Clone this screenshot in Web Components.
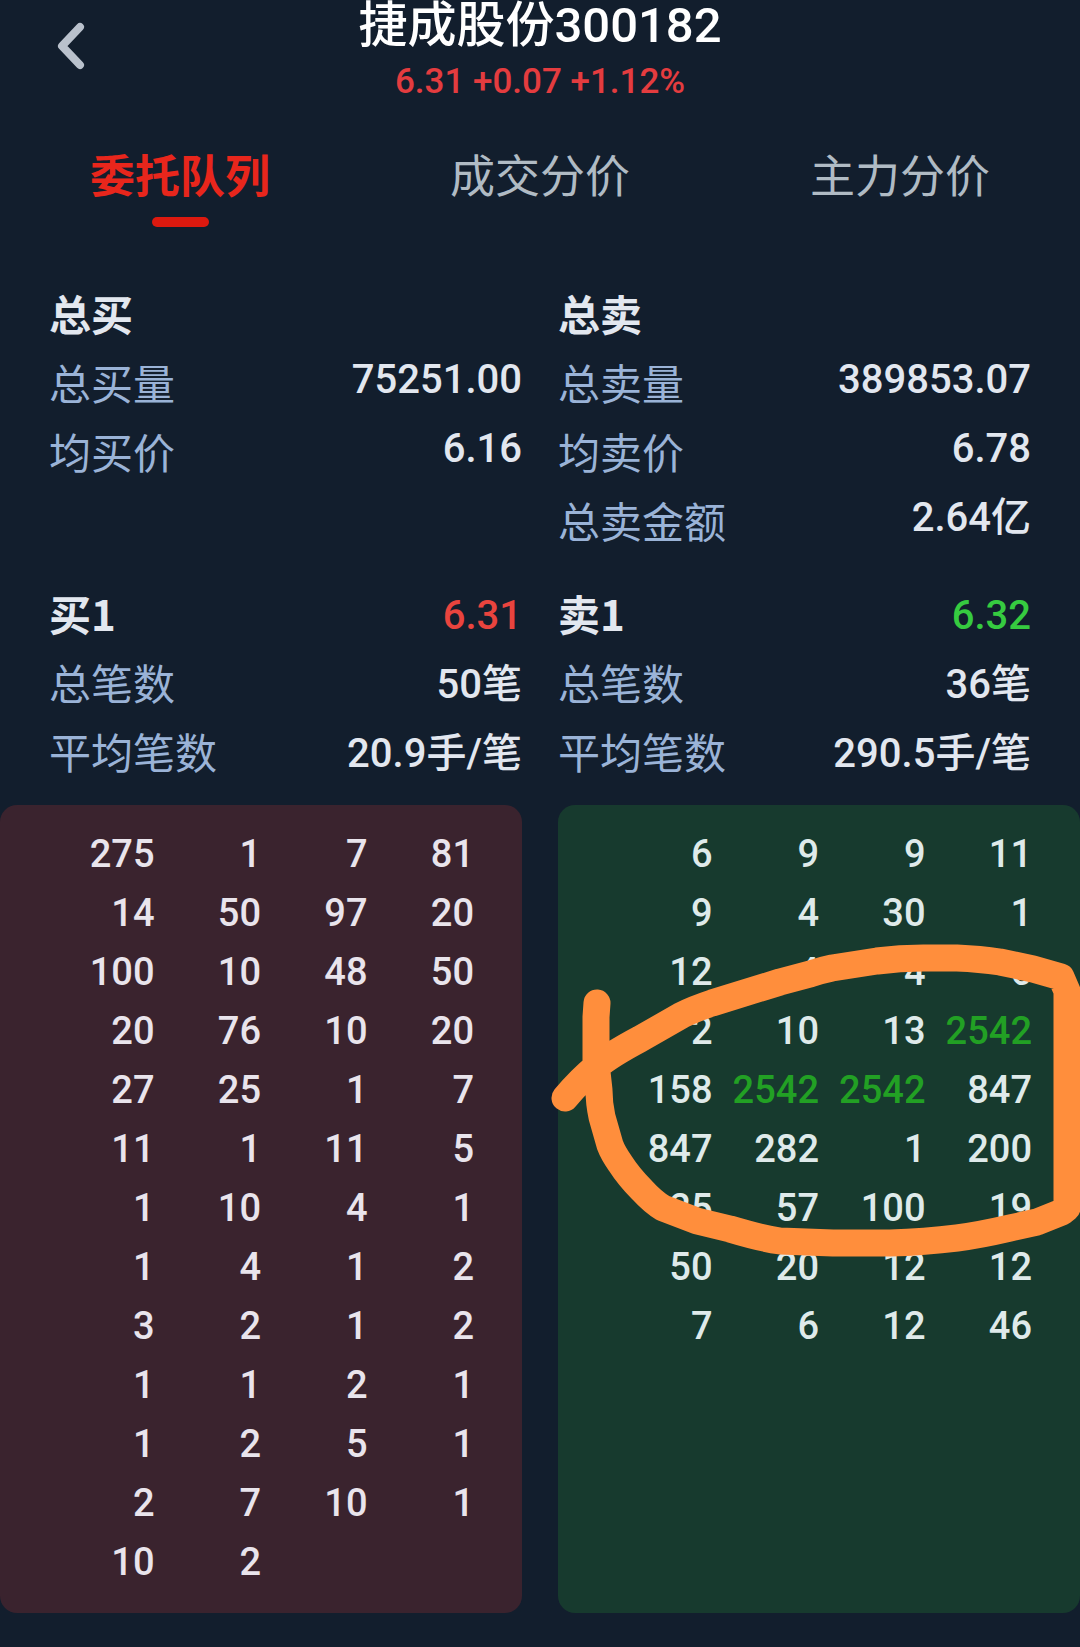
<!DOCTYPE html>
<html lang="zh-CN">
<head>
<meta charset="utf-8">
<meta name="viewport" content="width=device-width, initial-scale=1">
<title>捷成股份300182 委托队列</title>
<style>
  body {
    margin: 0;
    background: #121e2d;
    color: #e2e7ef;
    font-family: Roboto, "Noto Sans CJK SC", sans-serif;
    font-weight: 500;
  }
</style>
</head>
<body>
<order-queue-page></order-queue-page>

<script>
class QuoteHeader extends HTMLElement {
  constructor() {
    super();
    this.attachShadow({ mode: 'open' });
  }

  connectedCallback() {
    this.shadowRoot.innerHTML = `
      <style>
        :host {
          display: grid;
          grid-template-columns: 96px 1fr 96px;
        }
        button {
          display: flex;
          align-items: center;
          justify-content: flex-end;
          height: 92px;
          padding: 0 8px 0 0;
          border: 0;
          background: none;
        }
        .title { text-align: center; }
        h1 {
          margin: 0;
          color: #fff;
          font-size: 49px;
          font-weight: 500;
          line-height: 52px;
        }
        p {
          margin: 6px 0 0;
          color: #e43c3f;
          font-size: 35px;
          line-height: 48px;
        }
      </style>
      <button type="button" aria-label="返回">
        <svg width="35" height="52" viewBox="0 0 35 52" fill="none" stroke="#b9c1cc"
          stroke-width="8" stroke-linecap="round" stroke-linejoin="round">
          <path d="M27 7 L9 26 L27 45"/>
        </svg>
      </button>
      <div class="title">
        <h1><slot name="name"></slot></h1>
        <p><slot name="price"></slot></p>
      </div>`;
  }
}
customElements.define('quote-header', QuoteHeader);

class QuoteTabs extends HTMLElement {
  constructor() {
    super();
    this.attachShadow({ mode: 'open' });
  }

  connectedCallback() {
    const labels = this.getAttribute('labels').split(',');
    this.shadowRoot.innerHTML = `
      <style>
        :host { display: block; padding: 36px 0 53px; }
        nav { display: grid; grid-template-columns: repeat(3, 1fr); }
        button {
          display: flex;
          flex-direction: column;
          align-items: center;
          gap: 11px;
          padding: 0;
          border: 0;
          background: none;
          color: #b0bbc4;
          font: 400 45px/64px "Noto Sans CJK SC", sans-serif;
        }
        button[aria-current] { color: #e8261c; font-weight: 700; }
        button[aria-current]::after {
          content: "";
          width: 57px;
          height: 10px;
          border-radius: 5px;
          background: #dc190f;
        }
      </style>
      <nav>
        ${labels.map((label, i) => `<button type="button"${i === 0 ? ' aria-current="page"' : ''}>${label}</button>`).join('')}
      </nav>`;
  }
}
customElements.define('quote-tabs', QuoteTabs);

class StatRow extends HTMLElement {
  constructor() {
    super();
    this.attachShadow({ mode: 'open' });
  }

  connectedCallback() {
    this.shadowRoot.innerHTML = `
      <style>
        :host {
          display: flex;
          justify-content: space-between;
          align-items: flex-start;
          height: 69px;
          white-space: nowrap;
        }
        .label {
          color: #9ab3d7;
          font-family: "Noto Sans CJK SC", sans-serif;
          font-size: 42px;
          font-weight: 400;
          line-height: 66px;
        }
        .value { font-size: 40px; line-height: 72px; }
        :host([heading]) .label { color: #e2e7ef; font-weight: 700; }
        :host([raised]) .value { line-height: 62px; }
        :host([trend=up]) .value { color: #e9443e; }
        :host([trend=down]) .value { color: #36cb40; }
      </style>
      <span class="label">${this.getAttribute('label')}</span>
      <span class="value"><slot></slot></span>`;
  }
}
customElements.define('stat-row', StatRow);

class StatColumns extends HTMLElement {
  constructor() {
    super();
    this.attachShadow({ mode: 'open' });
    this.shadowRoot.innerHTML = `
      <style>
        :host {
          display: grid;
          grid-template-columns: 1fr 1fr;
          column-gap: 36px;
          padding: 0 49px;
        }
      </style>
      <div><slot name="buy"></slot></div>
      <div><slot name="sell"></slot></div>`;
  }
}
customElements.define('stat-columns', StatColumns);

class QueuePanel extends HTMLElement {
  constructor() {
    super();
    this.attachShadow({ mode: 'open' });
  }

  connectedCallback() {
    const cells = this.getAttribute('lots').split(' ');
    const rows = [];
    for (let i = 0; i < cells.length; i += 4) {
      const row = cells.slice(i, i + 4);
      while (row.length < 4) row.push('');
      rows.push(row);
    }
    // lots of 1000 and more are highlighted
    this.shadowRoot.innerHTML = `
      <style>
        :host {
          position: relative;
          display: block;
          padding: 20px 48px 21px;
          border-radius: 17px;
          background: #3a232e;
          color: #e9e4ec;
        }
        :host([side=sell]) { background: #173a2e; color: #dfeaea; }
        table {
          width: 100%;
          table-layout: fixed;
          border-collapse: collapse;
        }
        td {
          height: 59px;
          padding: 0;
          font-size: 38px;
          line-height: 59px;
          text-align: right;
        }
        .big { color: #22a024; }
      </style>
      <table>
        ${rows.map(row => `<tr>${row.map(n => `<td${Number(n) >= 1000 ? ' class="big"' : ''}>${n}</td>`).join('')}</tr>`).join('')}
      </table>
      <slot></slot>`;
  }
}
customElements.define('queue-panel', QueuePanel);

// hand-drawn ring laid over the sell queue
class PenRing extends HTMLElement {
  constructor() {
    super();
    this.attachShadow({ mode: 'open' });
    this.shadowRoot.innerHTML = `
      <style>
        :host { position: absolute; inset: 0; pointer-events: none; }
        svg { display: block; width: 100%; height: 100%; overflow: visible; }
      </style>
      <svg viewBox="558 805 522 808" fill="none" stroke="#ff8e3c" stroke-width="27"
        stroke-linecap="round" stroke-linejoin="round" aria-hidden="true">
        <path d="M565 1098 Q580 1080 597 1066 Q610 1055 640 1039 L682 1015 Q694 1009 712 1003
          L780 982 L810 974 Q822 970 832 968 L877 961 Q900 958 923 958 L957 958
          Q980 959 1000 962 L1033 969 L1061 977 L1067 991 L1067 1208 L1062 1212
          L1037 1222 L1010 1228 Q980 1235 957 1238 Q925 1242 890 1243 L833 1243
          L780 1241 Q760 1238 730 1229 L697 1221 L663 1208 Q653 1202 642 1190
          Q629 1177 620 1163 Q613 1153 610 1145 L602 1117 Q599 1103 599 1090 L596 1063
          L596 1017 L597 1003"/>
      </svg>`;
  }
}
customElements.define('pen-ring', PenRing);

class OrderQueuePage extends HTMLElement {
  constructor() {
    super();
    this.attachShadow({ mode: 'open' });
  }

  connectedCallback() {
    this.shadowRoot.innerHTML = `
      <style>
        :host { display: block; padding-bottom: 34px; overflow: hidden; }
        .totals { margin-bottom: 24px; }
        .queues {
          display: grid;
          grid-template-columns: 1fr 1fr;
          gap: 36px;
          margin-top: 18px;
        }
      </style>
      <quote-header>
        <span slot="name">捷成股份300182</span>
        <span slot="price">6.31 +0.07 +1.12%</span>
      </quote-header>
      <quote-tabs labels="委托队列,成交分价,主力分价"></quote-tabs>

      <stat-columns class="totals">
        <stat-row slot="buy" heading label="总买"></stat-row>
        <stat-row slot="buy" raised label="总买量">75251.00</stat-row>
        <stat-row slot="buy" raised label="均买价">6.16</stat-row>
        <stat-row slot="sell" heading label="总卖"></stat-row>
        <stat-row slot="sell" raised label="总卖量">389853.07</stat-row>
        <stat-row slot="sell" raised label="均卖价">6.78</stat-row>
        <stat-row slot="sell" raised label="总卖金额">2.64亿</stat-row>
      </stat-columns>

      <stat-columns>
        <stat-row slot="buy" heading trend="up" label="买1">6.31</stat-row>
        <stat-row slot="buy" label="总笔数">50笔</stat-row>
        <stat-row slot="buy" label="平均笔数">20.9手/笔</stat-row>
        <stat-row slot="sell" heading trend="down" label="卖1">6.32</stat-row>
        <stat-row slot="sell" label="总笔数">36笔</stat-row>
        <stat-row slot="sell" label="平均笔数">290.5手/笔</stat-row>
      </stat-columns>

      <div class="queues">
        <queue-panel side="buy" lots="275 1 7 81 14 50 97 20 100 10 48 50 20 76 10 20 27 25 1 7 11 1 11 5 1 10 4 1 1 4 1 2 3 2 1 2 1 1 2 1 1 2 5 1 2 7 10 1 10 2"></queue-panel>
        <queue-panel side="sell" lots="6 9 9 11 9 4 30 1 12 4 4 6 2 10 13 2542 158 2542 2542 847 847 282 1 200 25 57 100 19 50 20 12 12 7 6 12 46">
          <pen-ring></pen-ring>
        </queue-panel>
      </div>`;
  }
}
customElements.define('order-queue-page', OrderQueuePage);
</script>
</body>
</html>
